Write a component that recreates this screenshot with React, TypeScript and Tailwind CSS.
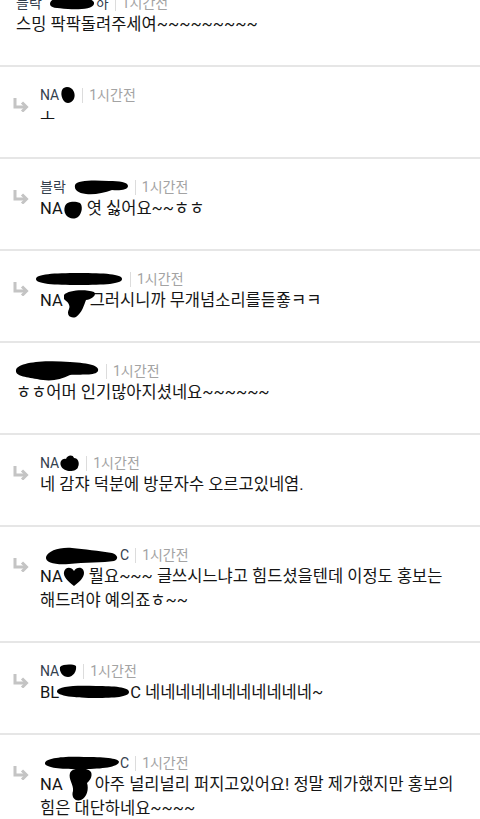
import { ReactNode } from 'react'

// black marker scribbles lying over names, kept out of the line box
const Blob = ({ w, h, d, box, pos }: { w: number; h: number; d: string; box: string; pos: string }) => (
  <span className={`relative inline-block h-0 ${box}`}>
    <svg width={w} height={h} viewBox={`0 0 ${w} ${h}`} className={`absolute left-0 ${pos}`}>
      <path d={d} fill="#000" />
    </svg>
  </span>
)

const ReplyArrow = () => (
  <svg width="17" height="14" viewBox="0 0 17 14" className="block">
    <path d="M3 0 V9 H14" fill="none" stroke="#c4c4c4" strokeWidth="3" />
    <path d="M10 4.5 L14.5 9 L10 13.5" fill="none" stroke="#c4c4c4" strokeWidth="3" />
  </svg>
)

type CommentProps = {
  name: ReactNode
  reply?: boolean
  children: ReactNode
  first?: boolean
}

const Comment = ({ name, reply, children, first }: CommentProps) => (
  <div className={first ? '-mt-[25px]' : 'border-t-2 border-[#e6e6e6]'}>
    <div className="flex pt-[18px] pb-[28px]">
      {reply && (
        <div className="w-10 shrink-0 pl-[12px] pt-[13px]">
          <ReplyArrow />
        </div>
      )}
      <div className={reply ? '' : 'pl-4'}>
        <div className="flex items-center h-5 text-[14px] leading-5">
          <span className="text-[#34404e] whitespace-nowrap">{name}</span>
          <span className="mx-[6px] w-px h-[15px] bg-[#dcdcdc]" />
          <span className="text-[#a3a3a3]">1시간전</span>
        </div>
        <div className="text-[16.5px] leading-6 text-[#151515] whitespace-nowrap">{children}</div>
      </div>
    </div>
  </div>
)

export default function App() {
  return (
    <div
      className="w-[480px] h-[819px] overflow-hidden bg-white"
      style={{ fontFamily: 'Roboto, "Noto Sans CJK KR", sans-serif' }}
    >
      <Comment
        first
        name={
          <>
            블락
            <Blob w={48} h={14} box="w-[48px] ml-[6px]" pos="-top-[12px]" d="M2 8 C2 2 14 0 26 1 C38 2 47 3 46 8 C45 13 30 14 20 13 C8 12 2 12 2 8Z" />
            하
          </>
        }
      >
        스밍 팍팍돌려주세여~~~~~~~~~
      </Comment>

      <Comment
        reply
        name={
          <>
            NA
            <Blob w={17} h={18} box="w-[17px]" pos="-top-[14px]" d="M3 4 C6 -1 13 1 15 6 C17 11 14 17 9 17 C4 17 1 9 3 4Z" />
          </>
        }
      >
        ㅗ
      </Comment>

      <Comment
        reply
        name={
          <>
            블락
            <Blob w={55} h={16} box="w-[55px] ml-[8px]" pos="-top-[13px]" d="M1 6 C3 1 20 1 35 2 C45 2 54 3 54 7 C54 11 45 12 38 11 C30 14 20 16 12 15 C4 14 0 11 1 6Z" />
          </>
        }
      >
        NA
        <Blob w={20} h={20} box="w-[20px]" pos="-top-[14px]" d="M2 6 C4 1 12 1 17 3 C20 6 19 12 16 16 C12 20 6 19 3 15 C1 12 1 9 2 6Z" /> 엿 싫어요~~ㅎㅎ
      </Comment>

      <Comment
        reply
        name={
          <Blob w={90} h={14} box="w-[90px] -ml-[6px]" pos="-top-[12px]" d="M2 7 C2 2 20 1 45 1 C70 1 88 2 88 7 C88 12 70 13 45 13 C20 13 2 12 2 7Z" />
        }
      >
        NA
        <Blob w={36} h={30} box="w-[30px] -ml-[3px]" pos="-top-[17px]" d="M4 6 C8 1 25 0 34 3 C37 6 32 10 26 11 C24 16 22 24 16 28 C10 30 6 26 9 20 C11 15 6 12 4 10 Z" />
        그러시니까 무개념소리를듣죻ㅋㅋ
      </Comment>

      <Comment
        name={
          <Blob w={85} h={22} box="w-[85px] -ml-[1px]" pos="-top-[16px]" d="M1 10 C3 2 30 0 55 2 C75 3 85 6 83 11 C81 16 65 14 55 15 C45 20 35 22 22 19 C10 17 0 16 1 10Z" />
        }
      >
        ㅎㅎ어머 인기많아지셨네요~~~~~~
      </Comment>

      <Comment
        reply
        name={
          <>
            NA
            <Blob w={21} h={19} box="w-[21px]" pos="-top-[14px]" d="M2 12 C0 7 4 4 7 5 C8 1 14 0 15 4 C19 4 21 9 19 13 C18 18 5 19 2 12Z" />
          </>
        }
      >
        네 감쟈 덕분에 방문자수 오르고있네염.
      </Comment>

      <Comment
        reply
        name={
          <>
            <Blob w={76} h={20} box="w-[76px] ml-[4px]" pos="-top-[15px]" d="M2 12 C4 6 15 2 28 3 C40 4 55 6 68 8 C74 10 75 14 70 16 C60 18 40 17 25 19 C12 20 1 18 2 12Z" />
            C
          </>
        }
      >
        NA
        <Blob w={22} h={21} box="w-[22px]" pos="-top-[16px]" d="M11 20 C5 15 0 11 1 6 C2 1 8 0 11 5 C14 0 21 1 21 7 C21 12 16 16 11 20Z" /> 뭘요~~~ 글쓰시느냐고 힘드셨을텐데 이정도 홍보는
        <br />
        해드려야 예의죠ㅎ~~
      </Comment>

      <Comment
        reply
        name={
          <>
            NA
            <Blob w={18} h={14} box="w-[18px]" pos="-top-[12px]" d="M1 3 C4 0 14 0 17 2 C18 7 14 13 9 13 C4 13 0 8 1 3Z" />
          </>
        }
      >
        BL
        <Blob w={74} h={16} box="w-[74px] -ml-[3px]" pos="-top-[14px]" d="M1 7 C2 2 20 1 40 2 C58 2 73 3 73 8 C73 13 58 14 40 14 C20 14 0 12 1 7Z" />
        C 네네네네네네네네네네네~
      </Comment>

      <Comment
        reply
        name={
          <>
            <Blob w={76} h={16} box="w-[76px] ml-[4px]" pos="-top-[13px]" d="M1 8 C2 3 20 1 40 2 C58 2 75 3 75 7 C74 12 58 14 40 14 C20 15 0 13 1 8Z" />
            C
          </>
        }
      >
        NA
        <Blob w={28} h={35} box="w-[28px] ml-[4px]" pos="-top-[23px]" d="M3 6 C6 0 20 0 24 5 C26 10 22 14 20 16 C22 22 20 30 14 33 C8 35 4 30 6 24 C7 18 1 12 3 6Z" />
        아주 널리널리 퍼지고있어요! 정말 제가했지만 홍보의
        <br />
        힘은 대단하네요~~~~
      </Comment>
    </div>
  )
}
